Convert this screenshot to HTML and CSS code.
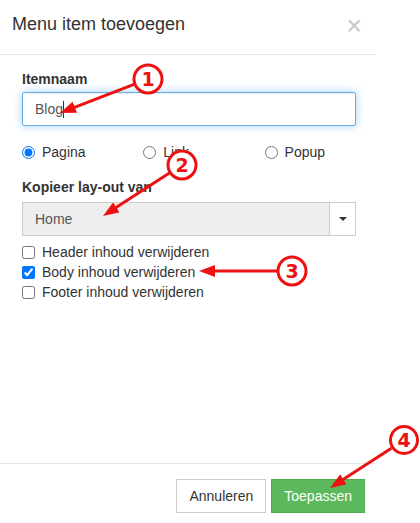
FILE: index.html
```html
<!DOCTYPE html>
<html lang="nl">
<head>
    <meta charset="UTF-8">
    <meta name="viewport" content="width=device-width, initial-scale=1.0">
    <title>Menu item toevoegen</title>
    <link rel="stylesheet" href="styles.css">
</head>
<body>
    <div class="modal">
        <div class="modal-header">
            <h4 class="modal-title">Menu item toevoegen</h4>
            <span class="close">&times;</span>
        </div>

        <div class="modal-body">
            <label class="field-label name-label">Itemnaam</label>
            <div class="text-input">Blog<span class="cursor"></span></div>

            <div class="radio-row">
                <label class="radio-col"><input type="radio" name="type" checked> Pagina</label>
                <label class="radio-col"><input type="radio" name="type"> Link</label>
                <label class="radio-col"><input type="radio" name="type"> Popup</label>
            </div>

            <label class="field-label">Kopieer lay-out van</label>
            <div class="select-box">
                <span class="select-value">Home</span>
                <span class="select-toggle"><span class="caret"></span></span>
            </div>

            <div class="checks">
                <label class="check"><input type="checkbox"> Header inhoud verwijderen</label>
                <label class="check"><input type="checkbox" checked> Body inhoud verwijderen</label>
                <label class="check"><input type="checkbox"> Footer inhoud verwijderen</label>
            </div>
        </div>

        <div class="modal-footer">
            <button class="btn btn-default">Annuleren</button>
            <button class="btn btn-success">Toepassen</button>
        </div>
    </div>

    <!-- rode annotaties bovenop het dialoogvenster -->
    <svg class="notes" width="420" height="523" viewBox="0 0 420 523">
        <defs>
            <marker id="head" markerUnits="userSpaceOnUse" viewBox="0 0 16 12" markerWidth="16" markerHeight="12" refX="6" refY="6" orient="auto">
                <path d="M0,0 L16,6 L0,12 z" fill="#ee1111"/>
            </marker>
        </defs>
        <g stroke="#ee1111" stroke-width="3" fill="none">
            <line x1="134" y1="84.4" x2="69.3" y2="109.4" marker-end="url(#head)"/>
            <line x1="169.4" y1="173.1" x2="111.4" y2="210.6" marker-end="url(#head)"/>
            <line x1="277" y1="271" x2="209" y2="271" marker-end="url(#head)"/>
            <line x1="391.4" y1="448.2" x2="338.4" y2="482.6" marker-end="url(#head)"/>
            <circle cx="148" cy="79" r="14" fill="#fff"/>
            <circle cx="182" cy="165" r="14" fill="#fff"/>
            <circle cx="292" cy="271" r="14" fill="#fff"/>
            <circle cx="404" cy="440" r="13.5" fill="#fff"/>
        </g>
        <g class="note-num">
            <text x="148" y="86">1</text>
            <text x="182" y="172">2</text>
            <text x="292" y="278">3</text>
            <text x="404" y="447">4</text>
        </g>
    </svg>
</body>
</html>
```

FILE: styles.css
```css
    body {
        margin: 0;
        padding: 0;
        background: #fff;
        font-family: "Liberation Sans", Arial, sans-serif;
        font-size: 14px;
        line-height: 20px;
        color: #333;
        position: relative;
        overflow: hidden;
    }

    .modal {
        width: 375px;
        height: 523px;
        display: flex;
        flex-direction: column;
        background: #fff;
    }

    .modal-header {
        display: flex;
        justify-content: space-between;
        align-items: flex-start;
        padding: 11px 12px 15px 12px;
        border-bottom: 1px solid #e5e5e5;
    }

    .modal-title {
        margin: 0;
        font-size: 18px;
        font-weight: normal;
        line-height: 26px;
    }

    .close {
        font-size: 27px;
        line-height: 26px;
        color: #c8c8c8;
        margin-top: 2px;
        margin-right: 1px;
        font-weight: normal;
    }

    .modal-body {
        flex: 1;
        padding: 14px 19px 0 22px;
    }

    .field-label {
        display: block;
        font-weight: bold;
        margin-bottom: 5px;
    }

    .name-label {
        margin-bottom: 3px;
    }

    .text-input {
        height: 34px;
        box-sizing: border-box;
        padding: 6px 12px;
        border: 1px solid #66afe9;
        border-radius: 2px;
        box-shadow: inset 0 1px 1px rgba(0, 0, 0, 0.075), 0 0 8px rgba(102, 175, 233, 0.6);
        color: #555;
        display: flex;
        align-items: center;
    }

    .cursor {
        display: inline-block;
        width: 1px;
        height: 17px;
        background: #333;
    }

    .radio-row {
        display: flex;
        margin: 16px 0 15px 0;
    }

    .radio-col {
        width: 121.3px;
        flex-shrink: 0;
        display: flex;
        align-items: center;
    }

    .radio-col input,
    .check input {
        width: 13px;
        height: 13px;
        margin: 0 7px 0 0;
    }

    .select-box {
        height: 34px;
        box-sizing: border-box;
        display: flex;
        border: 1px solid #ccc;
        background: #eee;
        color: #555;
    }

    .select-value {
        flex: 1;
        padding: 6px 12px;
    }

    .select-toggle {
        width: 25px;
        border-left: 1px solid #ccc;
        background: #fff;
        display: flex;
        align-items: center;
        justify-content: center;
    }

    .caret {
        width: 0;
        height: 0;
        border-top: 4px solid #333;
        border-left: 4px solid transparent;
        border-right: 4px solid transparent;
    }

    .checks {
        margin-top: 6px;
    }

    .check {
        display: flex;
        align-items: center;
        height: 20px;
    }

    .modal-footer {
        display: flex;
        justify-content: flex-end;
        gap: 5px;
        padding: 15px 10px 10px 10px;
        border-top: 1px solid #e5e5e5;
    }

    .btn {
        height: 34px;
        padding: 6px 12px;
        font-family: inherit;
        font-size: 14px;
        border: 1px solid transparent;
        border-radius: 0;
        cursor: pointer;
    }

    .btn-default {
        background: #fff;
        border-color: #ccc;
        color: #333;
    }

    .btn-success {
        background: #5cb85c;
        border-color: #4cae4c;
        color: #fff;
    }

    .notes {
        position: absolute;
        left: 0;
        top: 0;
        pointer-events: none;
    }

    .note-num text {
        font-family: "DejaVu Sans", sans-serif;
        font-weight: bold;
        font-size: 19px;
        fill: #ee1111;
        text-anchor: middle;
    }
```
